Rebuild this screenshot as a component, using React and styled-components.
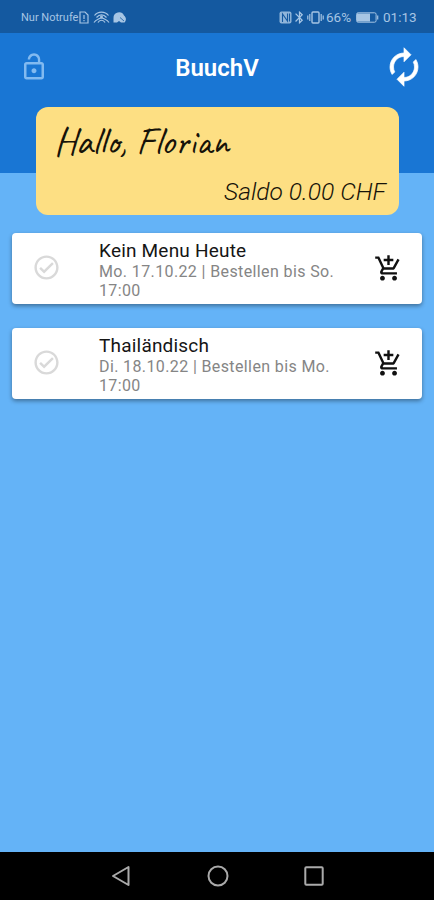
import styled, { createGlobalStyle } from "styled-components";
import {
  MdAddShoppingCart,
  MdAutorenew,
  MdBluetooth,
  MdLockOpen,
  MdOutlineCheckCircle,
} from "react-icons/md";

const menus = [
  {
    id: 1,
    name: "Kein Menu Heute",
    info: "Mo. 17.10.22 | Bestellen bis So. 17:00",
  },
  {
    id: 2,
    name: "Thailändisch",
    info: "Di. 18.10.22 | Bestellen bis Mo. 17:00",
  },
];

const SimIcon = () => (
  <svg width="10" height="13" viewBox="0 0 10 13" fill="none" stroke="currentColor">
    <path d="M1 1h5l3 3v8H1z" strokeWidth="1.2" />
    <path d="M5 4v4M5 9v1.3" strokeWidth="1.2" />
  </svg>
);

const HotspotIcon = () => (
  <svg width="17" height="13" viewBox="0 0 17 13" fill="none" stroke="currentColor">
    <path
      d="M1.5 4.5C5 0 12 0 15.5 4.5M3.5 6.5c3-3.5 7-3.5 10 0M1 11.5c2-3 4-3 5.5-4s2.5-1 4 0 3.5 1 5.5 4M5 11.5c1.5-3 5.5-3 7 0"
      strokeWidth="1.2"
    />
    <circle cx="8.5" cy="6" r="1" fill="currentColor" />
  </svg>
);

const BlobIcon = () => (
  <svg width="14" height="12" viewBox="0 0 14 12">
    <path d="M.5 11.5V7A5.500 5.500 0 0 1 11 4.500c2.500 2 2.500 5 .5 7H8L6 10 4 11.500z" fill="currentColor" />
    <path d="m7 6.500 4 3.500" stroke="#1459a0" strokeWidth=".8" />
  </svg>
);

const NfcIcon = () => (
  <svg width="13" height="13" viewBox="0 0 13 13">
    <rect x=".5" y=".5" width="12" height="12" rx="2" fill="currentColor" opacity=".85" />
    <path d="M3.5 11V3l5 7V2.500M10.500 2.500v8" fill="none" stroke="#1459a0" strokeWidth="1.1" />
  </svg>
);

const VibrateIcon = () => (
  <svg width="17" height="13" viewBox="0 0 17 13" fill="none" stroke="currentColor" strokeWidth="1.4">
    <rect x="5" y="1" width="7" height="11" rx="1" />
    <path d="M2.8 3v7M.8 4.500v4M14.200 3v7M16.200 4.500v4" strokeWidth="1.2" />
  </svg>
);

const BatteryIcon = () => (
  <svg width="23" height="11" viewBox="0 0 23 11">
    <rect x=".6" y=".8" width="19.5" height="9.4" rx="1.5" fill="none" stroke="currentColor" />
    <rect x="1" y="1.5" width="13" height="8" fill="currentColor" />
    <path d="M21.7 3.500v4" stroke="currentColor" strokeWidth="1.2" />
  </svg>
);

const App = () => {
  return (
    <>
      <GlobalStyle />
      <StyledScreen>
        <StyledStatusBar>
          <StyledCarrier>Nur Notrufe</StyledCarrier>
          <SimIcon />
          <StyledHotspot>
            <HotspotIcon />
          </StyledHotspot>
          <BlobIcon />
          <StyledStatusRight>
            <NfcIcon />
            <MdBluetooth size={15} />
            <VibrateIcon />
            <StyledPercent>66%</StyledPercent>
            <BatteryIcon />
            <StyledClock>01:13</StyledClock>
          </StyledStatusRight>
        </StyledStatusBar>
        <StyledHeader>
          <StyledToolbar>
            <StyledLock>
              <MdLockOpen size={30} />
            </StyledLock>
            <StyledTitle>BuuchV</StyledTitle>
            <StyledRefresh>
              <MdAutorenew size={42} />
            </StyledRefresh>
          </StyledToolbar>
          <StyledBalanceCard>
            <StyledGreeting>Hallo, Florian</StyledGreeting>
            <StyledBalance>Saldo 0.00 CHF</StyledBalance>
          </StyledBalanceCard>
        </StyledHeader>
        <StyledMenuList>
          {menus.map((menu) => (
            <StyledMenuCard key={menu.id}>
              <StyledCheck>
                <MdOutlineCheckCircle size={29} />
              </StyledCheck>
              <StyledMenuText>
                <h3>{menu.name}</h3>
                <p>{menu.info}</p>
              </StyledMenuText>
              <StyledCart>
                <MdAddShoppingCart size={29} />
              </StyledCart>
            </StyledMenuCard>
          ))}
        </StyledMenuList>
        <StyledNavBar>
          <svg width="20" height="22" viewBox="0 0 20 22">
            <path d="M17.5 2v18L2 11z" />
          </svg>
          <svg width="22" height="22" viewBox="0 0 22 22">
            <circle cx="11" cy="11" r="9.5" />
          </svg>
          <svg width="20" height="20" viewBox="0 0 20 20">
            <rect x="1.3" y="1.3" width="17.4" height="17.4" rx="1" />
          </svg>
        </StyledNavBar>
      </StyledScreen>
    </>
  );
};

const GlobalStyle = createGlobalStyle`
  * {
    box-sizing: border-box;
    margin: 0;
    padding: 0;
  }
  body {
    font-family: Roboto, "Liberation Sans", sans-serif;
    overflow: hidden;
  }
  svg {
    display: block;
    flex-shrink: 0;
  }
`;

const StyledScreen = styled.div`
  width: 434px;
  height: 900px;
  display: flex;
  flex-direction: column;
  background: #64b3f7;
`;

const StyledStatusBar = styled.div`
  height: 33px;
  flex-shrink: 0;
  display: flex;
  align-items: center;
  padding: 1px 17px 0 21px;
  background: #1459a0;
  color: #a6c5e4;
`;

const StyledCarrier = styled.span`
  width: 58px;
  font-size: 11px;
  white-space: nowrap;
`;

const StyledHotspot = styled.div`
  margin: 0 3px 0 4px;
`;

const StyledStatusRight = styled.div`
  display: flex;
  align-items: center;
  margin-left: auto;
`;

const StyledPercent = styled.span`
  width: 27px;
  margin: 0 3px 0 2px;
  font-size: 13.5px;
`;

const StyledClock = styled.span`
  width: 34px;
  margin-left: 4px;
  font-size: 13.5px;
`;

const StyledHeader = styled.header`
  height: 140px;
  flex-shrink: 0;
  background: #1976d4;
`;

const StyledToolbar = styled.div`
  height: 74px;
  display: grid;
  grid-template-columns: 80px 1fr 80px;
  align-items: center;
  padding: 0 9px 6px 19px;
`;

const StyledLock = styled.div`
  color: #82baf0;
`;

const StyledTitle = styled.h1`
  padding: 2px 10px 0 0;
  font-size: 24px;
  font-weight: 600;
  color: #fff;
  text-align: center;
`;

const StyledRefresh = styled.div`
  justify-self: end;
  color: #fff;
  path:last-child {
    stroke: #fff;
    stroke-width: 0.4;
  }
`;

const StyledBalanceCard = styled.section`
  width: 363px;
  height: 108px;
  margin-left: 36px;
  padding: 15px 13px 9px 18px;
  display: flex;
  flex-direction: column;
  justify-content: space-between;
  border-radius: 12px;
  background: #fddf83;
  color: #161309;
`;

const StyledGreeting = styled.p`
  font-family: Caveat, Lato, cursive;
  font-size: 38.6px;
  font-weight: 400;
  line-height: 40px;
`;

const StyledBalance = styled.p`
  align-self: flex-end;
  font-size: 24.6px;
  font-style: italic;
  font-weight: 300;
  line-height: 28px;
`;

const StyledMenuList = styled.main`
  flex: 1;
  display: flex;
  flex-direction: column;
  gap: 24px;
  padding: 60px 12px 0;
`;

const StyledMenuCard = styled.article`
  height: 71px;
  display: flex;
  align-items: center;
  padding: 0 19px 0 20px;
  border-radius: 4px;
  background: #fff;
  box-shadow: 0 2px 4px rgba(0, 0, 0, 0.38);
`;

const StyledCheck = styled.div`
  width: 67px;
  padding-bottom: 3px;
  color: #d9d9d9;
`;

const StyledMenuText = styled.div`
  width: 250px;
  padding-top: 2px;
  h3 {
    font-size: 19px;
    font-weight: 400;
    line-height: 22px;
    letter-spacing: 0.2px;
    color: #151515;
  }
  p {
    font-size: 16px;
    line-height: 19px;
    letter-spacing: 0.38px;
    color: #858585;
  }
`;

const StyledCart = styled.div`
  margin-left: auto;
  color: #111;
`;

const StyledNavBar = styled.nav`
  height: 48px;
  flex-shrink: 0;
  display: flex;
  align-items: center;
  justify-content: space-between;
  padding: 0 110px 0 111px;
  background: #000;
  svg {
    fill: none;
    stroke: #aaa;
    stroke-width: 2;
    stroke-linejoin: round;
  }
`;

export default App;
